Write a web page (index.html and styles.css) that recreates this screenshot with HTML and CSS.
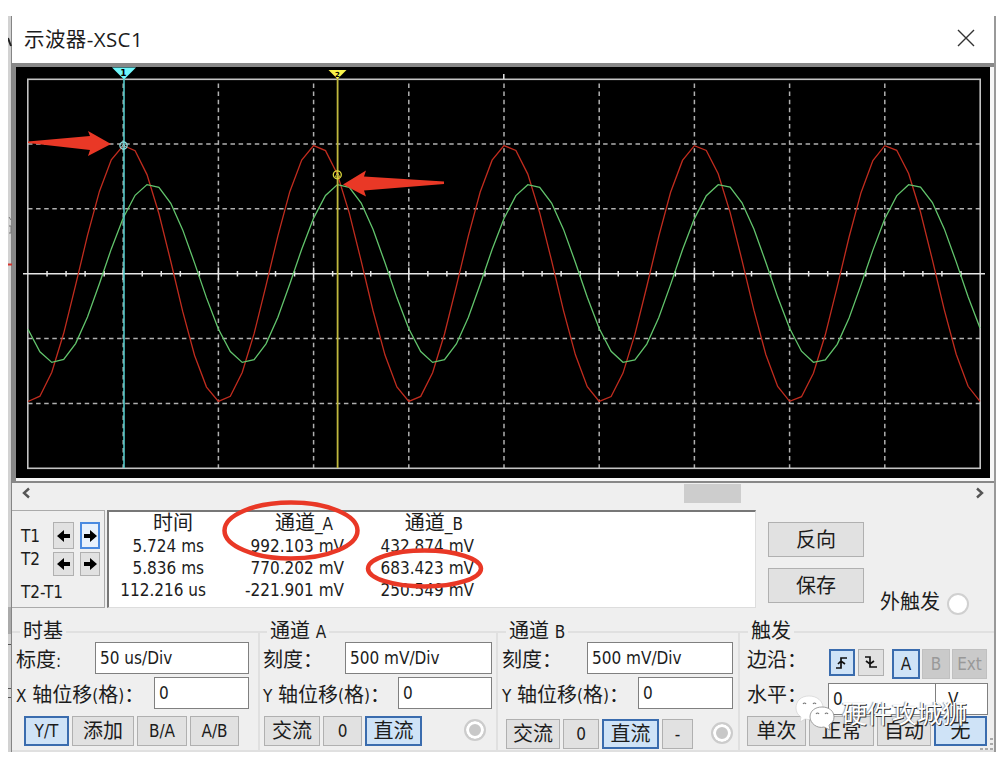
FILE: index.html
```html
<!DOCTYPE html>
<html lang="zh-CN">
<head>
    <meta charset="UTF-8">
    <meta name="viewport" content="width=device-width, initial-scale=1.0">
    <title>示波器-XSC1</title>
    <link rel="stylesheet" href="styles.css">
</head>
<body>
    <div class="desktop">
        <svg class="edge" width="4" height="736" viewBox="8 16 4 736">
            <rect x="8" y="16" width="3" height="736" fill="#d2d2d2"/>
            <rect x="8" y="607" width="3" height="27" fill="#aaa"/>
            <rect x="11" y="16" width="1" height="736" fill="#858585"/>
            <path d="M8 38l3 8" stroke="#222" stroke-width="2"/>
            <path d="M9 217l2 3M9 226h2v7H9" stroke="#777" fill="none"/>
            <path d="M8 264.5h4" stroke="#d5332c" stroke-width="2"/>
            <path d="M8 644.5h3M8 688.5h3M8 697.5h3" stroke="#555"/>
        </svg>
        <div class="window">
            <div class="titlebar">
                <span>示波器-XSC1</span>
                <svg width="18" height="18" viewBox="0 0 18 18"><path d="M1 1l16 16M17 1L1 17" stroke="#333" stroke-width="1.4"/></svg>
            </div>

            <div class="scope">
                <svg width="974" height="411" viewBox="16 67 974 411">
                    <g id="grid" stroke="#b0b0b0" stroke-width="1.5" stroke-dasharray="4.5 3.6"></g>
                    <rect x="27.8" y="79.3" width="952.4" height="389" fill="none" stroke="#c4c4c4" stroke-width="1.6"/>
                    <g id="ticks" stroke="#e6e6e6" stroke-width="1.5">
                        <path d="M23 273.7h962M503.8 74v5"/>
                    </g>
                    <polyline id="waveA" fill="none" stroke="#c02c1e" stroke-width="1.3"/>
                    <polyline id="waveB" fill="none" stroke="#62c46c" stroke-width="1.3"/>

                    <path d="M124 79v389" stroke="#55c8c8" stroke-width="1.6"/>
                    <path d="M112 67.5h24l-12 12z" fill="#6ff6fa"/>
                    <text x="123.5" y="76" class="mark">1</text>
                    <circle cx="123.5" cy="145.5" r="3.6" fill="none" stroke="#8be0e0" stroke-width="1.3"/>
                    <path d="M121.5 147l2-3 2 3z" fill="none" stroke="#8be0e0" stroke-width=".8"/>

                    <path d="M337.6 78v390" stroke="#c0b83e" stroke-width="1.8"/>
                    <path d="M328.5 70h18l-9 9z" fill="#f8f34a"/>
                    <text x="337.5" y="76.5" class="mark small">2</text>
                    <circle cx="337.3" cy="174.8" r="4" fill="none" stroke="#dcd83c" stroke-width="1.3"/>
                    <path d="M335 177l2.5-4 2.5 4z" fill="none" stroke="#dcd83c" stroke-width=".8"/>

                    <path d="M28 141.5l62-5.500-2-5 23 13-23 12 2-6-62-7z" fill="#e93826"/>
                    <path d="M444 181.5l-80-5 2-6-23 14 23 12-2-6 80-6.500z" fill="#e93826"/>
                </svg>
            </div>

            <div class="scrollbar">
                <svg width="10" height="12" viewBox="0 0 10 12"><path d="M8 1.5L3 6l5 4.5" fill="none" stroke="#555" stroke-width="2.4"/></svg>
                <div class="thumb"></div>
                <svg width="10" height="12" viewBox="0 0 10 12"><path d="M2 1.5L7 6l-5 4.5" fill="none" stroke="#555" stroke-width="2.4"/></svg>
            </div>

            <div class="readout">
                <div class="cursors">
                    <span>T1</span>
                    <button><svg class="arrow" viewBox="0 0 14 12"><path d="M0 6l7-6v4h6v4H7v4z"/></svg></button>
                    <button class="focus"><svg class="arrow" viewBox="0 0 14 12"><path d="M14 6L7 0v4H1v4h6v4z"/></svg></button>
                    <span class="t2">T2</span>
                    <button><svg class="arrow" viewBox="0 0 14 12"><path d="M0 6l7-6v4h6v4H7v4z"/></svg></button>
                    <button><svg class="arrow" viewBox="0 0 14 12"><path d="M14 6L7 0v4H1v4h6v4z"/></svg></button>
                    <span class="diff">T2-T1</span>
                </div>
                <div class="values">
                    <div class="col time">
                        <b>时间</b><p>5.724 ms</p><p>5.836 ms</p><p class="wide">112.216 us</p>
                    </div>
                    <div class="col">
                        <b>通道<i>_A</i></b><p>992.103 mV</p><p>770.202 mV</p><p>-221.901 mV</p>
                    </div>
                    <div class="col chb">
                        <b>通道<i>_B</i></b><p>432.874 mV</p><p>683.423 mV</p><p>250.549 mV</p>
                    </div>
                </div>
                <div class="actions">
                    <button>反向</button>
                    <button>保存</button>
                </div>
                <div class="external">外触发 <span class="dot"></span></div>
            </div>

            <div class="groups">
                <fieldset class="timebase">
                    <legend>时基</legend>
                    <div class="row"><label>标度<i>:</i></label><div class="field w154">50 us/Div</div></div>
                    <div class="row"><label><i>X</i> 轴位移<i>(</i>格<i>)</i>：</label><div class="field w95">0</div></div>
                    <div class="buttons">
                        <button class="on w45">Y/T</button><button class="cn w62">添加</button><button class="w50">B/A</button><button class="w49">A/B</button>
                    </div>
                </fieldset>
                <fieldset class="channel-a">
                    <legend>通道 <i>A</i></legend>
                    <div class="row"><label>刻度：</label><div class="field w147">500 mV/Div</div></div>
                    <div class="row"><label><i>Y</i> 轴位移<i>(</i>格<i>)</i>：</label><div class="field w94">0</div></div>
                    <div class="buttons">
                        <button class="cn w56">交流</button><button class="w39">0</button><button class="cn on w57">直流</button>
                        <span class="radio"></span>
                    </div>
                </fieldset>
                <fieldset class="channel-b">
                    <legend>通道 <i>B</i></legend>
                    <div class="row"><label>刻度：</label><div class="field w146">500 mV/Div</div></div>
                    <div class="row"><label><i>Y</i> 轴位移<i>(</i>格<i>)</i>：</label><div class="field w95">0</div></div>
                    <div class="buttons">
                        <button class="cn w54">交流</button><button class="w36">0</button><button class="cn on w57">直流</button><button class="w31">-</button>
                        <span class="radio"></span>
                    </div>
                </fieldset>
                <fieldset class="trigger">
                    <legend>触发</legend>
                    <div class="row">
                        <label>边沿：</label>
                        <div class="edges">
                            <button class="on"><svg width="14" height="14" viewBox="0 0 14 14"><path d="M1 12h5V2h6M3 8l3-3 4 3" fill="none" stroke="#111" stroke-width="1.7"/></svg></button>
                            <button><svg width="14" height="14" viewBox="0 0 14 14"><path d="M1 1h5v10h7M2 5l4 3 4-3" fill="none" stroke="#111" stroke-width="1.7"/></svg></button>
                        </div>
                        <div class="source">
                            <button class="on">A</button><button disabled>B</button><button class="ext" disabled>Ext</button>
                        </div>
                    </div>
                    <div class="row level">
                        <label>水平：</label>
                        <div class="field num">0</div><div class="field unit">V</div>
                    </div>
                    <div class="buttons">
                        <button class="cn w59">单次</button><button class="cn w65">正常</button><button class="cn w54">自动</button><button class="cn on w53">无</button>
                    </div>
                </fieldset>
            </div>
        </div>
    </div>

    <svg class="marks" width="270" height="100" viewBox="220 495 270 100">
        <ellipse cx="291" cy="530.5" rx="66.5" ry="28" fill="none" stroke="#e93826" stroke-width="4.5"/>
        <ellipse cx="424.5" cy="568.5" rx="56.5" ry="18" fill="none" stroke="#e93826" stroke-width="4.5"/>
    </svg>

    <svg class="grip" width="16" height="14" viewBox="0 0 16 14"><path d="M11 2h3M11 7h3M11 12h3M6 12h3M1 12h3" stroke="#aaa" stroke-width="2"/></svg>

    <div class="watermark">
        <svg width="42" height="36" viewBox="0 0 42 36">
            <path d="M14 1C6 1 1 6 1 13c0 4 2 7 5 9l-1 5 5-3c8 2 18-1 18-11C28 6 22 1 14 1z" fill="#fff" stroke="#ccc" stroke-width=".6"/>
            <path d="M27 12c-7 0-12 4-12 10s7 12 14 10l6 3-1-5c3-2 5-4 5-8 0-6-5-10-12-10z" fill="#fff" stroke="#888" stroke-width=".8"/>
            <g fill="none" stroke="#777" stroke-width="1.2"><path d="M8 9q1.500-2 3 0M18 9q1.500-2 3 0M21 19q1.500-2 3 0M30 19q1.500-2 3 0"/></g>
        </svg>
        <span>硬件攻城狮</span>
    </div>

    <script>
        const left = 28, step = 95.2, period = 190.5, zero = 273.5;

        // dashed graticule
        let grid = '';
        for (let i = 1; i < 10; i++) {
            const x = left + i * step;
            grid += `<path d="M${x} 83.5V468"/>`;
        }
        [144, 208.8, 338.5, 403.5].forEach(y => {
            grid += `<path d="M28 ${y}H980"/>`;
        });
        document.getElementById('grid').innerHTML = grid;

        // ticks on the zero line, five per division
        let ticks = '';
        for (let i = 1; i < 50; i++) {
            const x = left + i * step / 5;
            const h = i % 5 === 0 ? 6 : 2.5;
            ticks += `<path d="M${x} ${zero - h}V${zero + h + 0.5}"/>`;
        }
        document.getElementById('ticks').innerHTML += ticks;

        // 16 samples in each period
        function wave(id, amplitude, peak) {
            const points = [];
            for (let i = 0; i <= 80; i++) {
                const x = left + i * 11.9;
                const y = zero - amplitude * Math.cos(2 * Math.PI * (x - peak) / period);
                points.push(x.toFixed(1) + ',' + y.toFixed(1));
            }
            document.getElementById(id).setAttribute('points', points.join(' '));
        }
        wave('waveA', 128.5, 126);
        wave('waveB', 89.5, 150.5);
    </script>
</body>
</html>
```

FILE: styles.css
```css
* {
    box-sizing: border-box;
}
body {
    margin: 0;
    background: #fff;
    color: #1c1c1c;
    font-family: "DejaVu Sans Condensed", "Noto Sans", "Noto Sans CJK SC", sans-serif;
    font-size: 17px;
    position: relative;
    height: 759px;
    overflow: hidden;
}
i, b {
    font-style: normal;
    font-weight: normal;
}
p {
    margin: 0;
}
.desktop {
    display: flex;
    padding: 16px 0 0 8px;
}
.edge {
    display: block;
}
.window {
    width: 984px;
    height: 736px;
    background: #efefef;
    border-right: 2px solid #999;
}
.titlebar {
    height: 47px;
    padding: 0 19px 4px 12px;
    background: #fff;
    display: flex;
    align-items: center;
    justify-content: space-between;
    font-family: "Open Sans", "Noto Sans CJK SC", sans-serif;
    font-size: 20.5px;
    letter-spacing: 0.4px;
}
.scope {
    height: 420px;
    border: solid #888;
    border-width: 4px 0 2px 4px;
    background: #f6f6f6;
}
.scope svg {
    display: block;
    background: #000;
}
.mark {
    font-family: "DejaVu Sans", sans-serif;
    font-size: 9px;
    font-weight: bold;
    text-anchor: middle;
}
.mark.small {
    font-size: 7px;
}

.scrollbar {
    height: 27px;
    padding: 1px 9px 0;
    display: flex;
    align-items: flex-start;
}
.scrollbar svg {
    margin-top: 3px;
}
.thumb {
    width: 57px;
    height: 19px;
    margin: 0 234px 0 653px;
    background: #cdcdcd;
}

.readout {
    display: flex;
    height: 98px;
}
.cursors {
    width: 93px;
    height: 98px;
    padding: 11px 3px 0 9px;
    border: 1px solid #aaa;
    border-left: 0;
    display: grid;
    grid-template-columns: 26px 21px 20px;
    grid-template-rows: 27px 24px 32px;
    gap: 3px 6px;
    align-items: center;
}
.cursors span {
    white-space: nowrap;
}
.cursors .t2 {
    margin-top: -10px;
}
.cursors .diff {
    margin-top: -6px;
}
.cursors button {
    height: 100%;
}
.cursors .focus {
    background: #e8f1fc;
    border: 2px solid #4a8ae0;
}
.arrow {
    width: 14px;
    height: 12px;
    fill: #000;
    flex: none;
}
.values {
    width: 649px;
    margin-left: 2px;
    border: 1px solid #ddd;
    border-top: 2px solid #777;
    border-left: 2px solid #777;
    background: #fff;
    display: flex;
}
.col {
    width: 140px;
    text-align: right;
    line-height: 21.8px;
    white-space: nowrap;
}
.time {
    width: 95px;
}
.time .wide {
    margin-right: -2px;
}
.col.chb {
    width: 130px;
}
.col b {
    display: block;
    height: 24px;
    line-height: 22px;
    padding-right: 11px;
    font-size: 20px;
}
.col i {
    font-size: 17px;
}
.actions {
    padding: 12px 0 0 12px;
}
.actions button {
    width: 96px;
    height: 35px;
    margin-bottom: 11px;
    padding-bottom: 3px;
    font-size: 20px;
}
.external {
    display: flex;
    align-items: center;
    align-self: flex-end;
    gap: 7px;
    height: 24px;
    margin: 0 0 -8px 16px;
    font-size: 20px;
    line-height: 20px;
    padding-bottom: 4px;
}
.dot {
    width: 22px;
    height: 22px;
    margin-top: 4px;
    border: 2px solid #d0d0d0;
    border-radius: 50%;
    background: #fff;
}

button {
    display: flex;
    align-items: center;
    justify-content: center;
    padding: 0;
    border: 1px solid #b0b0b0;
    background: #e1e1e1;
    color: #1c1c1c;
    font: inherit;
    white-space: nowrap;
}
button.on {
    background: #cfe3f7;
    border: 2px solid #3a6cae;
}
button:disabled {
    background: #cacaca;
    color: #999;
    border-color: #c0c0c0;
}

.groups {
    display: grid;
    grid-template-columns: 248px 238px 242px 254px;
    margin-top: 14px;
}
fieldset {
    min-width: 0;
    height: 130px;
    margin: 0;
    padding: 0 4px;
    border: 2px solid #e0e0e0;
    border-left: 0;
}
legend {
    height: 20px;
    line-height: 19px;
    margin-left: 4px;
    padding: 0 3px;
    font-size: 20px;
}
legend i, label i {
    font-size: 17px;
}
.row {
    display: flex;
    height: 32px;
    margin-bottom: 3px;
}
label {
    font-size: 20px;
    line-height: 36px;
    white-space: nowrap;
}
.field {
    height: 32px;
    margin-left: auto;
    padding-left: 4px;
    border: 1px solid #808080;
    background: #fff;
    line-height: 31px;
    flex: none;
}
.buttons {
    display: flex;
    gap: 3px;
    margin-top: 7px;
}
.buttons button {
    height: 30px;
}
.buttons .cn {
    font-size: 20px;
    padding-bottom: 3px;
}
.radio {
    width: 22px;
    height: 22px;
    margin: 3px 6px 0 auto;
    border: 2px solid #ccc;
    border-radius: 50%;
    background: #c8c8c8;
    box-shadow: inset 0 0 0 3px #fff;
}

.timebase .row {
    padding-right: 5px;
}
.timebase .buttons {
    padding-left: 8px;
}
.channel-a {
    padding-left: 3px;
}
.channel-a .buttons {
    padding-left: 1px;
}
.channel-b {
    padding-right: 5px;
}
.channel-b .buttons {
    margin-top: 10px;
    padding-left: 4px;
}
.channel-b .radio {
    margin-right: 0;
}
.trigger {
    padding-left: 7px;
    border-right: 0;
}
.trigger legend {
    margin-left: 1px;
}
.edges, .source {
    display: flex;
    gap: 3px;
    padding-top: 7px;
}
.edges {
    margin-left: 22px;
}
.edges button {
    width: 26px;
    height: 27px;
}
.source {
    margin-left: 8px;
    gap: 2px;
}
.source button {
    width: 28px;
    height: 30px;
}
.source .ext {
    width: 35px;
}
.level .num {
    width: 108px;
    margin: 6px 0 0 21px;
}
.level .unit {
    width: 53px;
    margin: 6px 0 0 -1px;
    padding-left: 12px;
}

.w31 { width: 31px; }
.w36 { width: 36px; }
.w39 { width: 39px; }
.w45 { width: 45px; }
.w49 { width: 49px; }
.w50 { width: 50px; }
.w53 { width: 53px; }
.w54 { width: 54px; }
.w56 { width: 56px; }
.w57 { width: 57px; }
.w59 { width: 59px; }
.w62 { width: 62px; }
.w65 { width: 65px; }
.w94 { width: 94px; }
.w95 { width: 95px; }
.w146 { width: 146px; }
.w147 { width: 147px; }
.w154 { width: 154px; }

/* drawn over the window */
.marks {
    position: absolute;
    left: 220px;
    top: 495px;
}
.grip {
    position: absolute;
    left: 979px;
    top: 737px;
}
.watermark {
    position: absolute;
    left: 795px;
    top: 695px;
    display: flex;
    gap: 5px;
    font-size: 25px;
    line-height: 40px;
    color: #fff;
    text-shadow: 1px 1px 0 #333, -1px 0 1px #999;
}
```
